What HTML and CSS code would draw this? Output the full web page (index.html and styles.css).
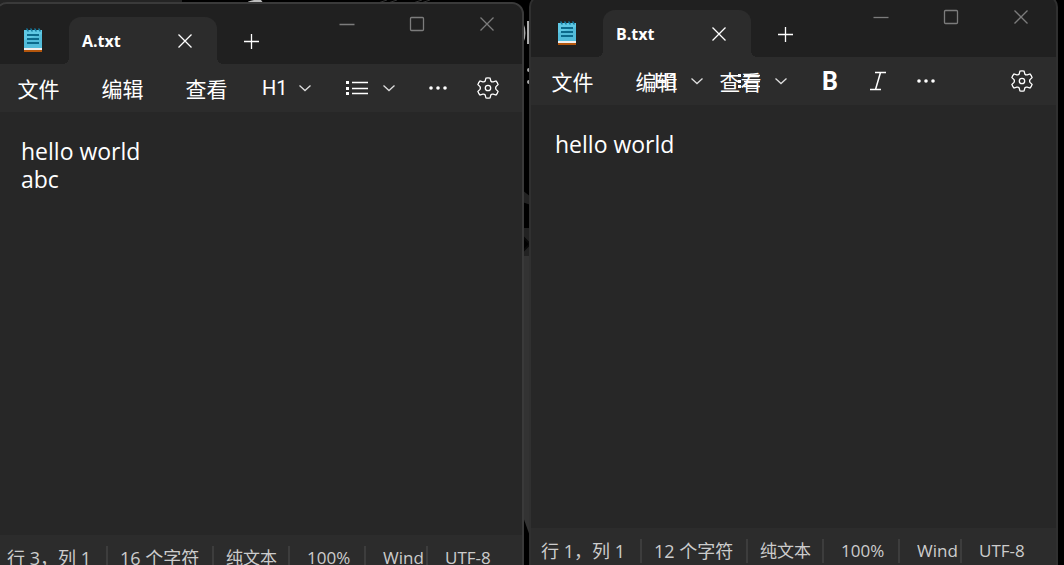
FILE: index.html
```
<!DOCTYPE html>
<html lang="zh-CN">
<head>
<meta charset="utf-8">
<title>A.txt / B.txt</title>
<link rel="stylesheet" href="styles.css">
</head>
<body>
<svg class="symbols" aria-hidden="true">
  <symbol id="notepad" viewBox="0 0 18 24">
    <path fill="#5fc8e4" d="M0 2h18v19H0z"/>
    <path fill="#49b4d4" d="M0 12L18 6v14H0z" opacity=".6"/>
    <path fill="#eee" d="M0 20h18v2H0z"/>
    <path fill="#b4560c" d="M0 22h18v2H0z"/>
    <path stroke="#0b6a8c" stroke-width="2" d="M3 7h12M3 11h12M3 15h12"/>
    <path stroke="#147ba0" stroke-width="1.6" stroke-linecap="round" d="M3 1l1 2M7 1l1 2M11 1l1 2M15 1l1 2"/>
  </symbol>
  <symbol id="close" viewBox="0 0 16 16"><path class="line" d="M1.500 1.500l13 13M14.500 1.500l-13 13"/></symbol>
  <symbol id="plus" viewBox="0 0 16 16"><path class="line" d="M8.500 1v15M1 8.500h15"/></symbol>
  <symbol id="minimize" viewBox="0 0 16 16"><path class="line" d="M.5 8.500h15"/></symbol>
  <symbol id="maximize" viewBox="0 0 16 16"><rect class="line" x="1.500" y="1.500" width="13" height="13" rx="1"/></symbol>
  <symbol id="chevron" viewBox="0 0 14 8"><path class="line" d="M1.500 1.500L7 6.500l5.500-5"/></symbol>
  <symbol id="list" viewBox="0 0 22 14">
    <path class="line" d="M6 1.500h16M6 7.500h16M6 12.500h16"/>
    <path fill="currentColor" d="M0 0h3v3H0zM0 6h3v3H0zM0 11h3v3H0z"/>
  </symbol>
  <symbol id="more" viewBox="0 0 18 4"><circle fill="currentColor" cx="2" cy="2" r="1.800"/><circle fill="currentColor" cx="9" cy="2" r="1.800"/><circle fill="currentColor" cx="16" cy="2" r="1.800"/></symbol>
  <symbol id="italic" viewBox="0 0 18 20"><path class="line italic-line" d="M6 1.500h11M1 18.500h11M11.500 1.500l-5 17"/></symbol>
  <symbol id="gear" viewBox="0 0 24 24">
    <circle class="line" cx="12" cy="12" r="2.700"/>
    <path class="line" d="M9.900 1.700q2.100-.5 4.200 0l.7 2.800q.9 1.200 2.400.8l2.800-.8q1.500 1.500 2.100 3.600l-2.100 2q-.8 1.400 0 2.800l2.100 2q-.6 2.100-2.100 3.600l-2.800-.8q-1.500-.4-2.400.8l-.7 2.800q-2.100.5-4.200 0l-.7-2.800q-.9-1.200-2.400-.8l-2.800.8q-1.500-1.500-2.100-3.600l2.100-2q.8-1.400 0-2.800l-2.100-2q.6-2.100 2.100-3.600l2.800.8q1.500.4 2.400-.8z" transform="translate(0 .5)"/>
  </symbol>
</svg>

<main class="desktop">
  <svg class="wallpaper" aria-hidden="true">
    <path fill="#242424" d="M0 0h182v12H0z"/>
    <path fill="#bbb" d="M246 4q1-3 8-4h7l3 4z"/>
    <path stroke="#333" d="M375 4l12-4M385 4l12-4M410 4l12-4M418 4l12-4"/>
    <ellipse cx="518" cy="33" rx="6" ry="12" fill="none" stroke="#aaa" stroke-width="3"/>
    <path fill="#aaa" d="M527 21h3v23h-3z"/>
    <circle cx="529" cy="70" r="2" fill="#aaa"/><circle cx="529" cy="82" r="2" fill="#aaa"/>
    <path fill="#222" d="M522 190l9 7v8l-9-3zM522 228h9v28h-9z"/>
    <path stroke="#080808" stroke-width="2" d="M522 236l8 8-8 8"/>
    <path fill="#333" d="M522 256h9v283l-9-25z"/>
  </svg>

  <section class="window window-a" aria-label="A.txt">
    <header class="titlebar">
      <svg class="app-icon" aria-hidden="true"><use href="#notepad"/></svg>
      <div class="tab"><span>A.txt</span><button class="plain tab-close" aria-label="关闭标签页"><svg class="icon-16"><use href="#close"/></svg></button></div>
      <button class="plain add" aria-label="新建标签页"><svg class="icon-16"><use href="#plus"/></svg></button>
      <div class="controls">
        <button class="plain" aria-label="最小化"><svg class="icon-16"><use href="#minimize"/></svg></button>
        <button class="plain" aria-label="最大化"><svg class="icon-16"><use href="#maximize"/></svg></button>
        <button class="plain" aria-label="关闭"><svg class="icon-16"><use href="#close"/></svg></button>
      </div>
    </header>
    <nav class="toolbar">
      <button class="plain menu">文件</button>
      <button class="plain menu">编辑</button>
      <button class="plain menu">查看</button>
      <div class="dropdowns">
        <button class="plain dropdown" aria-label="标题 H1"><span class="heading">H1</span><svg class="chevron"><use href="#chevron"/></svg></button>
        <button class="plain dropdown" aria-label="列表"><svg class="list"><use href="#list"/></svg><svg class="chevron"><use href="#chevron"/></svg></button>
      </div>
      <button class="plain more" aria-label="更多"><svg class="dots"><use href="#more"/></svg></button>
      <button class="plain tool settings" aria-label="设置"><svg class="gear"><use href="#gear"/></svg></button>
    </nav>
    <textarea class="editor" aria-label="A.txt 文本" spellcheck="false">hello world
abc</textarea>
    <footer class="status">
      <span class="cell position">行 3，列 1</span><span class="cell count">16 个字符</span><span class="cell format">纯文本</span><span class="cell zoom">100%</span><span class="cell ending">Wind</span><span class="cell">UTF-8</span>
    </footer>
  </section>

  <section class="window window-b" aria-label="B.txt">
    <header class="titlebar">
      <svg class="app-icon" aria-hidden="true"><use href="#notepad"/></svg>
      <div class="tab"><span>B.txt</span><button class="plain tab-close" aria-label="关闭标签页"><svg class="icon-16"><use href="#close"/></svg></button></div>
      <button class="plain add" aria-label="新建标签页"><svg class="icon-16"><use href="#plus"/></svg></button>
      <div class="controls">
        <button class="plain" aria-label="最小化"><svg class="icon-16"><use href="#minimize"/></svg></button>
        <button class="plain" aria-label="最大化"><svg class="icon-16"><use href="#maximize"/></svg></button>
        <button class="plain" aria-label="关闭"><svg class="icon-16"><use href="#close"/></svg></button>
      </div>
    </header>
    <nav class="toolbar">
      <button class="plain menu">文件</button>
      <button class="plain menu">编辑</button>
      <button class="plain menu">查看</button>
      <div class="dropdowns overlay">
        <button class="plain dropdown" aria-label="标题 H1"><span class="heading">H1</span><svg class="chevron"><use href="#chevron"/></svg></button>
        <button class="plain dropdown" aria-label="列表"><svg class="list"><use href="#list"/></svg><svg class="chevron"><use href="#chevron"/></svg></button>
      </div>
      <div class="styles">
        <button class="plain tool strong" aria-label="加粗">B</button>
        <button class="plain tool" aria-label="斜体"><svg class="italic"><use href="#italic"/></svg></button>
        <button class="plain tool" aria-label="更多"><svg class="dots"><use href="#more"/></svg></button>
      </div>
      <button class="plain tool settings" aria-label="设置"><svg class="gear"><use href="#gear"/></svg></button>
    </nav>
    <textarea class="editor" aria-label="B.txt 文本" spellcheck="false">hello world</textarea>
    <footer class="status">
      <span class="cell position">行 1，列 1</span><span class="cell count">12 个字符</span><span class="cell format">纯文本</span><span class="cell zoom">100%</span><span class="cell ending">Wind</span><span class="cell">UTF-8</span>
    </footer>
  </section>
</main>
</body>
</html>
```
FILE: styles.css
```
* { box-sizing: border-box; }
body {
  margin: 0;
  background: #000;
  color: #fff;
  font-family: "Open Sans", "Noto Sans CJK SC", sans-serif;
}
svg { display: block; flex: none; }
.symbols { position: absolute; width: 0; height: 0; }
.line { fill: none; stroke: currentColor; stroke-width: 1.3; }
.italic-line { stroke-width: 1.5; }
.desktop { position: relative; height: 100vh; overflow: hidden; }
.wallpaper { position: absolute; width: 100%; height: 100%; }

.window {
  position: absolute;
  display: flex;
  flex-direction: column;
  width: calc(50% - 3px);
  height: calc(100% + 16px);
  border: 2px solid #3a3a3a;
  border-radius: 12px;
  background: #272727;
  overflow: hidden;
}
.window-a { left: -5px; top: 2px; }
.window-b { left: calc(50% - 3px); top: -5px; border-color: #303030; }

.plain {
  display: flex;
  align-items: center;
  justify-content: center;
  padding: 0;
  border: 0;
  background: none;
  color: inherit;
  font: inherit;
}
.icon-16 { width: 16px; height: 16px; }

.titlebar { display: flex; flex: none; height: 60px; background: #202020; }
.app-icon { width: 18px; height: 24px; margin: 24px 27px 0; }
.tab {
  position: relative;
  display: flex;
  align-items: center;
  justify-content: space-between;
  align-self: flex-end;
  width: 148px;
  height: 47px;
  padding: 0 24px 0 13px;
  border-radius: 12px 12px 0 0;
  background: #2c2c2c;
  font-size: 16px;
  font-weight: 700;
}
.tab::before, .tab::after {
  content: "";
  position: absolute;
  bottom: 0;
  width: 6px;
  height: 6px;
}
.tab::before { right: 100%; background: radial-gradient(circle at 0 0, transparent 6px, #2c2c2c 6px); }
.tab::after { left: 100%; background: radial-gradient(circle at 100% 0, transparent 6px, #2c2c2c 6px); }
.add { width: 68px; height: 74px; }
.controls { display: flex; height: 40px; margin-left: auto; color: #7c7c7c; }
.controls .plain { width: 70px; }

.toolbar {
  position: relative;
  display: flex;
  flex: none;
  height: 48px;
  background: #2c2c2c;
}
.menu { width: 84px; padding-right: 1px; font-size: 21px; font-weight: 400; }
.dropdowns { display: flex; }
.dropdowns.overlay { position: absolute; left: 110px; height: 100%; }
.dropdown { width: 84px; justify-content: space-between; padding: 0 21px 0 13px; }
.heading { font: 400 20px Roboto, sans-serif; }
.chevron { width: 14px; height: 8px; color: #ddd; }
.list { width: 22px; height: 14px; }
.dots { width: 18px; height: 4px; }
.more { width: 42px; }
.styles { display: flex; margin-left: 23px; }
.tool { width: 48px; }
.strong { font-family: Roboto, sans-serif; font-size: 25px; font-weight: 700; }
.italic { width: 18px; height: 20px; }
.gear { width: 24px; height: 24px; }
.settings { margin-left: auto; margin-right: 10px; }

.editor {
  flex: 1;
  min-height: 0;
  width: 100%;
  margin: 0;
  padding: 25px 24px;
  border: 0;
  outline: 0;
  resize: none;
  background: #272727;
  color: #fff;
  font: 23px/28px "Open Sans", sans-serif;
}

.status {
  display: flex;
  align-items: center;
  flex: none;
  height: 46px;
  background: #2c2c2c;
  color: #ccc;
  font-size: 17px;
  font-weight: 400;
  line-height: 24px;
  white-space: nowrap;
}
.cell { flex: none; padding-left: 17px; border-right: 2px solid #3d3d3d; overflow: hidden; }
.cell:last-child { border: 0; }
.position { width: 111px; padding-left: 10px; font-size: 18px; }
.count { width: 106px; padding-left: 12px; font-size: 18px; }
.format { width: 76px; padding-left: 12px; }
.zoom { width: 76px; }
.ending { width: 62px; }
```
